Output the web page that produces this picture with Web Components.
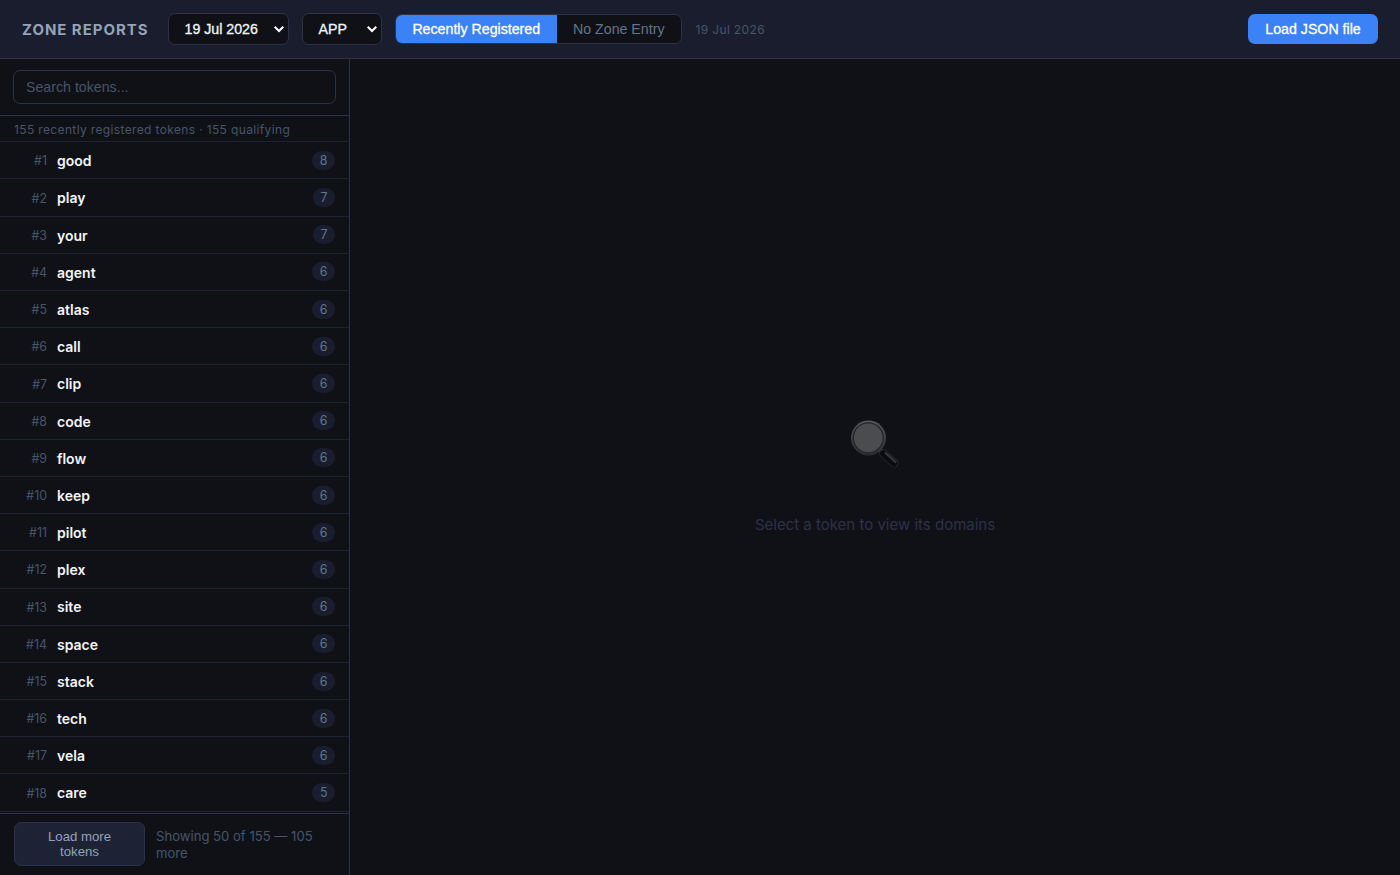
<!DOCTYPE html>
<html lang="en">
<head>
<meta charset="UTF-8">
<title>Zone Reports</title>
<style>
  html, body {
    height: 100%;
    margin: 0;
  }

  body {
    background: #0f1117;
    color: #e2e8f0;
    font-family: Inter, "Liberation Sans", sans-serif;
    overflow: hidden;
    --ui: "Liberation Sans", Arial, sans-serif;
    --line: #2d3148;
    --panel: #1a1d2e;
    --blue: #3b82f6;
  }
</style>
</head>
<body>
<zone-app></zone-app>

<script>
class ZoneSelect extends HTMLElement {
  constructor() {
    super();
    this.attachShadow({ mode: 'open' });
  }

  connectedCallback() {
    this.shadowRoot.innerHTML = `
      <style>
        :host {
          display: flex;
          align-items: center;
          justify-content: space-between;
          box-sizing: border-box;
          height: 32px;
          padding: 0 3px 0 15.5px;
          border: 1px solid var(--line);
          border-radius: 7px;
          background: #0f1117;
          color: #f1f5f9;
          font: 14.2px var(--ui);
          -webkit-text-stroke: 0.3px;
          white-space: nowrap;
        }

        svg {
          width: 12px;
          height: 8px;
        }
      </style>
      <slot></slot>
      <svg viewBox="0 0 12 8" fill="none" stroke="#fff" stroke-width="2"><path d="M1.7 1.7 6 6l4.3-4.3"/></svg>
    `;
  }
}

class ModeToggle extends HTMLElement {
  constructor() {
    super();
    this.attachShadow({ mode: 'open' });
  }

  connectedCallback() {
    this.shadowRoot.innerHTML = `
      <style>
        :host {
          display: flex;
          box-sizing: border-box;
          width: 287px;
          height: 30px;
          border: 1px solid var(--line);
          border-radius: 7px;
          overflow: hidden;
        }

        button {
          flex: 1;
          padding: 0;
          border: 0;
          background: #0f1117;
          color: #64748b;
          font: 14.2px var(--ui);
          white-space: nowrap;
        }

        .active {
          flex: 0 0 160.5px;
          background: var(--blue);
          color: #fff;
          -webkit-text-stroke: 0.3px;
        }
      </style>
      <button class="active">Recently Registered</button>
      <button>No Zone Entry</button>
    `;
  }
}

class ZoneHeader extends HTMLElement {
  constructor() {
    super();
    this.attachShadow({ mode: 'open' });
  }

  connectedCallback() {
    this.shadowRoot.innerHTML = `
      <style>
        :host {
          display: flex;
          align-items: center;
          box-sizing: border-box;
          height: 59px;
          padding: 0 22px;
          border-bottom: 1px solid var(--line);
          background: var(--panel);
        }

        h1 {
          width: 146px;
          margin: 0;
          color: #94a3b8;
          font-size: 15px;
          font-weight: 700;
          letter-spacing: 0.95px;
          white-space: nowrap;
        }

        .date {
          width: 121px;
          margin-right: 13px;
        }

        .tld {
          width: 80px;
          margin-right: 13px;
        }

        .label {
          margin-left: 13.5px;
          color: #475569;
          font-size: 12px;
          letter-spacing: 0.35px;
        }

        .load {
          width: 130px;
          height: 30px;
          margin-left: auto;
          padding: 0;
          border: 0;
          border-radius: 7px;
          background: var(--blue);
          color: #fff;
          font: 14.2px var(--ui);
          -webkit-text-stroke: 0.3px;
        }
      </style>
      <h1>ZONE REPORTS</h1>
      <zone-select class="date">19 Jul 2026</zone-select>
      <zone-select class="tld">APP</zone-select>
      <mode-toggle></mode-toggle>
      <span class="label">19 Jul 2026</span>
      <button class="load">Load JSON file</button>
    `;
  }
}

class TokenRow extends HTMLElement {
  constructor() {
    super();
    this.attachShadow({ mode: 'open' });
  }

  connectedCallback() {
    this.shadowRoot.innerHTML = `
      <style>
        :host {
          display: flex;
          align-items: center;
          flex: none;
          box-sizing: border-box;
          height: 37.19px;
          padding: 0 14px;
          border-bottom: 1px solid #1e2235;
        }

        .rank {
          width: 33px;
          margin-right: 10px;
          padding-top: 1px;
          color: #475569;
          font-size: 12.4px;
          text-align: right;
        }

        .name {
          flex: 1;
          padding-top: 0.7px;
          color: #f1f5f9;
          font-size: 14px;
          font-weight: 600;
        }

        .count {
          padding: 0 7.5px;
          border-radius: 10px;
          background: var(--panel);
          color: #64748b;
          font-size: 12.4px;
          line-height: 19px;
        }
      </style>
      <span class="rank">#${this.getAttribute('rank')}</span>
      <span class="name"><slot></slot></span>
      <span class="count">${this.getAttribute('count')}</span>
    `;
  }
}

class TokenSidebar extends HTMLElement {
  constructor() {
    super();
    this.attachShadow({ mode: 'open' });
  }

  get tokens() {
    return [
      ['good', 8], ['play', 7], ['your', 7], ['agent', 6], ['atlas', 6], ['call', 6],
      ['clip', 6], ['code', 6], ['flow', 6], ['keep', 6], ['pilot', 6], ['plex', 6],
      ['site', 6], ['space', 6], ['stack', 6], ['tech', 6], ['vela', 6], ['care', 5]
    ];
  }

  connectedCallback() {
    this.shadowRoot.innerHTML = `
      <style>
        :host {
          display: flex;
          flex-direction: column;
          box-sizing: border-box;
          width: 350px;
          border-right: 1px solid var(--line);
        }

        .search {
          box-sizing: border-box;
          height: 57px;
          padding: 11px 13px;
          border-bottom: 1px solid var(--line);
        }

        input {
          display: block;
          box-sizing: border-box;
          width: 100%;
          height: 34px;
          padding: 0 12px;
          border: 1px solid var(--line);
          border-radius: 7px;
          background: #0f1117;
          color: #e2e8f0;
          font: 14.2px var(--ui);
        }

        input::placeholder {
          color: #475569;
        }

        .stats {
          box-sizing: border-box;
          height: 26.3px;
          padding-left: 14px;
          border-bottom: 1px solid #1e2235;
          color: #475569;
          font-size: 12px;
          line-height: 27px;
          letter-spacing: 0.36px;
          white-space: nowrap;
        }

        .list {
          display: flex;
          flex: 1;
          flex-direction: column;
          min-height: 0;
          overflow: hidden;
        }

        .footer {
          display: flex;
          align-items: center;
          box-sizing: border-box;
          height: 62px;
          padding: 0 14px 1px;
          gap: 11px;
          border-top: 1px solid var(--line);
        }

        .more {
          flex: none;
          width: 131px;
          height: 44px;
          padding: 0 20px;
          border: 1px solid var(--line);
          border-radius: 7px;
          background: #1e2235;
          color: #94a3b8;
          font: 13.2px/15.5px var(--ui);
        }

        .shown {
          padding-top: 1px;
          color: #475569;
          font-size: 13.1px;
          line-height: 17px;
        }
      </style>
      <div class="search"><input type="text" placeholder="Search tokens..."></div>
      <div class="stats">155 recently registered tokens · 155 qualifying</div>
      <div class="list">
        ${this.tokens.map(([name, count], i) => `<token-row rank="${i + 1}" count="${count}">${name}</token-row>`).join('')}
      </div>
      <div class="footer">
        <button class="more">Load more tokens</button>
        <span class="shown">Showing 50 of 155 — 105 more</span>
      </div>
    `;
  }
}

class EmptyState extends HTMLElement {
  constructor() {
    super();
    this.attachShadow({ mode: 'open' });
  }

  connectedCallback() {
    this.shadowRoot.innerHTML = `
      <style>
        :host {
          display: flex;
          flex: 1;
          flex-direction: column;
          align-items: center;
          box-sizing: border-box;
          padding-top: 360px;
          color: #2d3148;
        }

        svg {
          width: 52px;
          height: 52px;
        }

        p {
          margin: 44px 0 0;
          font-size: 15px;
          line-height: 20px;
        }
      </style>
      <svg viewBox="0 0 52 52">
        <defs>
          <linearGradient id="rim" x1="0" y1="0" x2="0" y2="1">
            <stop offset="0" stop-color="#56575b"/>
            <stop offset="1" stop-color="#2b2c31"/>
          </linearGradient>
        </defs>
        <path d="m29.500 29.500 4 4" stroke="#434448" stroke-width="4"/>
        <path d="m34.500 34.500 10.800 9.800" stroke="#25262a" stroke-width="8.600" stroke-linecap="round"/>
        <path d="m34.500 34.800 10.500 9.600" stroke="#0a0b0e" stroke-width="6.600" stroke-linecap="round"/>
        <path d="m36.500 34 9.800 9" stroke="#38393d" stroke-width="2" stroke-linecap="round"/>
        <circle cx="19.500" cy="19" r="17.500" fill="url(#rim)"/>
        <circle cx="19.300" cy="18.800" r="15" fill="#4b4c50" stroke="#25262b" stroke-width="1.300"/>
      </svg>
      <p>Select a token to view its domains</p>
    `;
  }
}

class ZoneApp extends HTMLElement {
  constructor() {
    super();
    this.attachShadow({ mode: 'open' });
  }

  connectedCallback() {
    this.shadowRoot.innerHTML = `
      <style>
        :host {
          display: flex;
          flex-direction: column;
          height: 100vh;
        }

        main {
          display: flex;
          flex: 1;
          min-height: 0;
        }
      </style>
      <zone-header></zone-header>
      <main>
        <token-sidebar></token-sidebar>
        <empty-state></empty-state>
      </main>
    `;
  }
}

customElements.define('zone-select', ZoneSelect);
customElements.define('mode-toggle', ModeToggle);
customElements.define('zone-header', ZoneHeader);
customElements.define('token-row', TokenRow);
customElements.define('token-sidebar', TokenSidebar);
customElements.define('empty-state', EmptyState);
customElements.define('zone-app', ZoneApp);
</script>
</body>
</html>
